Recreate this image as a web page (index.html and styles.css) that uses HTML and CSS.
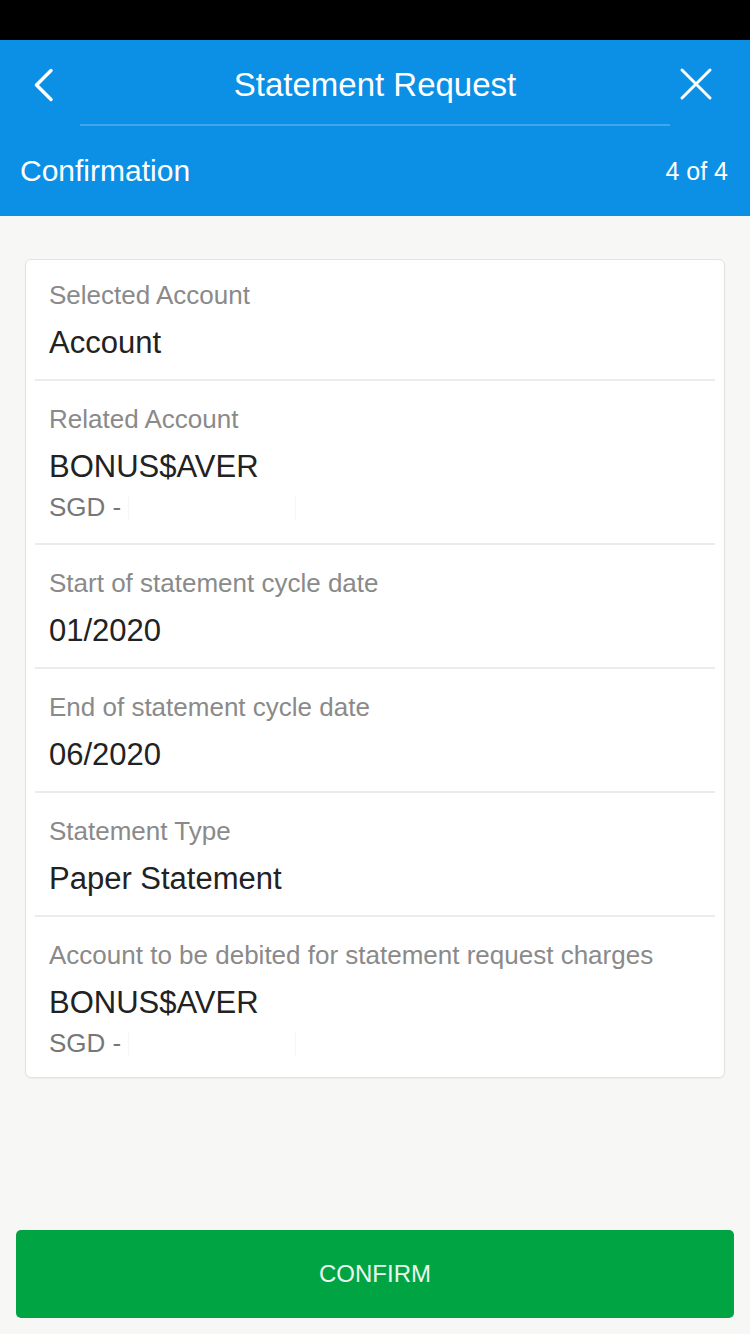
FILE: index.html
```html
<!DOCTYPE html>
<html lang="en">
<head>
    <meta charset="UTF-8">
    <meta name="viewport" content="width=device-width, initial-scale=1.0">
    <title>Statement Request</title>
    <link rel="stylesheet" href="styles.css">
</head>
<body>
    <div class="status-bar"></div>

    <div class="header">
        <div class="title-row">
            <span class="back-btn">
                <svg width="24" height="36" viewBox="0 0 24 36">
                    <path d="M19 3.5 L4.5 18 L19 32.5" fill="none" stroke="#fff" stroke-width="3.5" stroke-linecap="round" stroke-linejoin="round"/>
                </svg>
            </span>
            <h1>Statement Request</h1>
            <span class="close-btn">
                <svg width="36" height="36" viewBox="0 0 36 36">
                    <path d="M4 4 L32 32 M32 4 L4 32" fill="none" stroke="#fff" stroke-width="3" stroke-linecap="round"/>
                </svg>
            </span>
        </div>
        <div class="title-line"></div>
        <div class="step-row">
            <span class="step-name">Confirmation</span>
            <span class="step-count">4 of 4</span>
        </div>
    </div>

    <div class="content">
        <div class="card">
            <div class="row">
                <div class="label">Selected Account</div>
                <div class="value">Account</div>
            </div>
            <div class="row">
                <div class="label">Related Account</div>
                <div class="value">BONUS$AVER</div>
                <div class="sub">SGD - <span class="hidden-no"></span></div>
            </div>
            <div class="row">
                <div class="label">Start of statement cycle date</div>
                <div class="value">01/2020</div>
            </div>
            <div class="row">
                <div class="label">End of statement cycle date</div>
                <div class="value">06/2020</div>
            </div>
            <div class="row">
                <div class="label">Statement Type</div>
                <div class="value">Paper Statement</div>
            </div>
            <div class="row">
                <div class="label">Account to be debited for statement request charges</div>
                <div class="value">BONUS$AVER</div>
                <div class="sub">SGD - <span class="hidden-no"></span></div>
            </div>
        </div>
    </div>

    <button type="button" class="confirm-btn">CONFIRM</button>
</body>
</html>
```

FILE: styles.css
```css
body {
    margin: 0;
    padding: 0;
    width: 750px;
    height: 1334px;
    display: flex;
    flex-direction: column;
    background-color: #f7f7f6;
    font-family: "Liberation Sans", Arial, sans-serif;
    overflow: hidden;
}
.status-bar {
    height: 40px;
    background-color: #000;
}
.header {
    background-color: #0b90e5;
    color: #fff;
}
.title-row {
    height: 78px;
    padding-top: 6px;
    display: grid;
    grid-template-columns: 1fr auto 1fr;
    align-items: center;
}
.title-row h1 {
    margin: 0;
    font-size: 33px;
    font-weight: normal;
    line-height: 40px;
}
.back-btn {
    justify-self: start;
    padding-left: 32px;
    display: flex;
}
.close-btn {
    justify-self: end;
    padding-right: 36px;
    display: flex;
    margin-top: -3px;
}
.title-line {
    height: 2px;
    margin: 0 80px;
    background-color: rgba(255, 255, 255, 0.22);
}
.step-row {
    height: 90px;
    padding: 0 22px 0 20px;
    display: flex;
    justify-content: space-between;
    align-items: center;
}
.step-name {
    font-size: 30px;
    line-height: 36px;
}
.step-count {
    font-size: 25px;
    line-height: 30px;
}
.content {
    flex: 1;
    padding: 43px 25px 0;
}
.card {
    background-color: #fff;
    border: 1px solid #e2e2e2;
    border-radius: 6px;
    box-shadow: 0 1px 1px rgba(0, 0, 0, 0.04);
    padding: 0 9px;
}
.row {
    padding: 22px 14px 16px;
    border-bottom: 2px solid #ebebeb;
}
.row:first-child {
    padding-top: 19px;
}
.row:last-child {
    border-bottom: none;
    padding-bottom: 14px;
}
.label {
    font-size: 26px;
    line-height: 32px;
    color: #8a8a8a;
}
.value {
    margin-top: 12px;
    font-size: 31px;
    line-height: 40px;
    color: #222;
}
.sub {
    font-size: 26px;
    line-height: 40px;
    color: #777;
}
.hidden-no {
    display: inline-block;
    width: 166px;
    height: 24px;
    vertical-align: -4px;
    border-left: 1px solid #f7f7f7;
    border-right: 1px solid #f7f7f7;
}
.confirm-btn {
    margin: 0 16px 16px;
    height: 88px;
    border: none;
    border-radius: 5px;
    background-color: #00a443;
    color: #eaf7ee;
    font-family: "Liberation Sans", Arial, sans-serif;
    font-size: 24px;
}
```
